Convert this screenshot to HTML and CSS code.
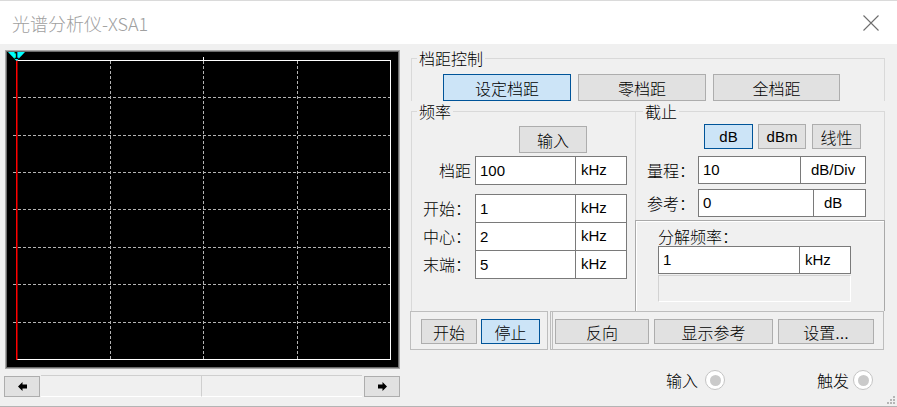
FILE: index.html
```html
<!DOCTYPE html>
<html>
<head>
    <title>光谱分析仪-XSA1</title>
    <link rel="stylesheet" href="styles.css">
</head>
<body>
<div class="window">
    <div class="titlebar">
        <span class="title">光谱分析仪-XSA1</span>
        <svg class="close" width="16" height="16" viewBox="0 0 16 16">
            <path d="M0.5 0.5L15.5 15.5M15.5 0.5L0.5 15.5" stroke="#6e6e6e" stroke-width="1.1" fill="none"/>
        </svg>
    </div>
    <div class="client">
        <div class="left">
            <div class="screen">
                <svg width="391" height="315" viewBox="0 0 391 315">
                    <rect width="391" height="315" fill="#000"/>
                    <g stroke="#b4b4b4" stroke-dasharray="3 2">
                        <line x1="6" y1="45.5" x2="383" y2="45.5"/>
                        <line x1="6" y1="83.5" x2="383" y2="83.5"/>
                        <line x1="6" y1="120.5" x2="383" y2="120.5"/>
                        <line x1="6" y1="157.5" x2="383" y2="157.5"/>
                        <line x1="6" y1="195.5" x2="383" y2="195.5"/>
                        <line x1="6" y1="232.5" x2="383" y2="232.5"/>
                        <line x1="6" y1="270.5" x2="383" y2="270.5"/>
                        <line x1="103.5" y1="9" x2="103.5" y2="307"/>
                        <line x1="196.5" y1="9" x2="196.5" y2="307"/>
                        <line x1="290.5" y1="9" x2="290.5" y2="307"/>
                    </g>
                    <rect x="9.5" y="8.5" width="374" height="299" fill="none" stroke="#fff"/>
                    <line x1="196.5" y1="5" x2="196.5" y2="8" stroke="#fff"/>
                    <line x1="9.75" y1="8" x2="9.75" y2="308" stroke="#f00" stroke-width="1.5"/>
                    <polygon points="1,0 18,0 9.5,9" fill="#0ff"/>
                    <text x="9.5" y="6.5" font-size="8" font-weight="bold" text-anchor="middle" font-family="DejaVu Sans">1</text>
                </svg>
            </div>
            <div class="hscroll">
                <div class="sbtn">
                    <svg width="9" height="9" viewBox="0 0 9 9"><path d="M0 4.5L4.5 0V2.5H9V6.5H4.5V9Z" fill="#000"/></svg>
                </div>
                <div class="track">
                    <div class="seg"></div>
                    <div class="seg seg-b"></div>
                </div>
                <div class="sbtn">
                    <svg width="9" height="9" viewBox="0 0 9 9"><path d="M9 4.5L4.5 0V2.5H0V6.5H4.5V9Z" fill="#000"/></svg>
                </div>
            </div>
        </div>

        <div class="right">
            <fieldset class="group span-group">
                <legend>档距控制</legend>
                <div class="span-btns">
                    <button class="btn on w-set">设定档距</button>
                    <button class="btn w-set">零档距</button>
                    <button class="btn w-full">全档距</button>
                </div>
            </fieldset>

            <div class="group-row">
                <fieldset class="group freq">
                    <legend>频率</legend>
                    <button class="btn btn-input">输入</button>
                    <div class="field-row first">
                        <span class="lbl">档距</span>
                        <input class="val" value="100">
                        <span class="unit">kHz</span>
                    </div>
                    <div class="field-row gap">
                        <span class="lbl">开始：</span>
                        <input class="val" value="1">
                        <span class="unit">kHz</span>
                    </div>
                    <div class="field-row stack">
                        <span class="lbl">中心：</span>
                        <input class="val" value="2">
                        <span class="unit">kHz</span>
                    </div>
                    <div class="field-row stack">
                        <span class="lbl">末端：</span>
                        <input class="val" value="5">
                        <span class="unit">kHz</span>
                    </div>
                </fieldset>

                <fieldset class="group cut">
                    <legend>截止</legend>
                    <div class="unit-btns">
                        <button class="btn latin on w-db">dB</button>
                        <button class="btn latin w-dbm">dBm</button>
                        <button class="btn w-lin">线性</button>
                    </div>
                    <div class="field-row range">
                        <span class="lbl">量程：</span>
                        <input class="val val-range" value="10">
                        <span class="unit unit-wide">dB/Div</span>
                    </div>
                    <div class="field-row ref">
                        <span class="lbl">参考：</span>
                        <input class="val val-ref" value="0">
                        <span class="unit unit-db">dB</span>
                    </div>
                    <div class="res-panel">
                        <div class="res-label">分解频率：</div>
                        <div class="field-row res">
                            <input class="val val-res" value="1">
                            <span class="unit">kHz</span>
                        </div>
                        <div class="res-blank"></div>
                    </div>
                </fieldset>
            </div>

            <div class="ctrl-row">
                <div class="ctrl-box run">
                    <button class="btn small w-start">开始</button>
                    <button class="btn small on w-stop">停止</button>
                </div>
                <div class="ctrl-box opts">
                    <button class="btn small w-rev">反向</button>
                    <button class="btn small w-show">显示参考</button>
                    <button class="btn small w-cfg">设置...</button>
                </div>
            </div>

            <div class="pins">
                <span class="pin-label">输入</span>
                <span class="radio"></span>
                <span class="pin-label pin-trig">触发</span>
                <span class="radio radio-trig"></span>
            </div>
        </div>
    </div>
    <svg class="grip" width="8" height="8" viewBox="0 0 8 8">
        <g fill="#b5b5b5">
            <rect x="6" y="0" width="2" height="2"/>
            <rect x="3" y="3" width="2" height="2"/>
            <rect x="6" y="3" width="2" height="2"/>
            <rect x="0" y="6" width="2" height="2"/>
            <rect x="3" y="6" width="2" height="2"/>
            <rect x="6" y="6" width="2" height="2"/>
        </g>
    </svg>
</div>
</body>
</html>
```

FILE: styles.css
```css
body {
    margin: 0;
    font-family: "Liberation Sans", "Noto Sans CJK SC", sans-serif;
    font-size: 16px;
    color: #000;
    background: #f0f0f0;
}
.window {
    position: relative;
    width: 897px;
    height: 406px;
    border-bottom: 1px solid #b4b4b4;
    background: #f0f0f0;
}
.titlebar {
    height: 43px;
    border-top: 1px solid #dadada;
    background: #fff;
    display: flex;
    align-items: center;
    justify-content: space-between;
    padding: 0 18px 0 12px;
}
.title {
    font-family: "Noto Sans CJK SC", sans-serif;
    font-size: 18px;
    font-weight: 300;
    line-height: 22px;
    color: #a0a0a0;
}
.close {
    display: block;
    margin-top: 1px;
}
.client {
    display: flex;
    height: 362px;
    padding-left: 4px;
}

/* left: the screen and its scroll bar */
.left {
    width: 396px;
    padding-top: 6px;
}
.screen {
    margin-left: 1px;
    width: 395px;
    height: 319px;
    box-sizing: border-box;
    border: 1px solid #a8a8a8;
    padding: 1px;
    background: #6b6b6b;
}
.screen svg {
    display: block;
}
.hscroll {
    display: flex;
    height: 21px;
    margin-top: 7px;
}
.sbtn {
    width: 36px;
    box-sizing: border-box;
    border: 1px solid #adadad;
    background: #e1e1e1;
    display: flex;
    align-items: center;
    justify-content: center;
}
.track {
    flex: 1;
    display: flex;
    padding: 0 2px 0 1px;
}
.seg {
    flex: 1;
    border-top: 1px solid #cfcfcf;
    border-bottom: 1px solid #fff;
    margin-top: -1px;
}
.seg-b {
    border-left: 1px solid #cfcfcf;
}

/* right: controls */
.right {
    width: 475px;
    margin-left: 10px;
    padding-top: 4px;
}
.group {
    margin: 0 0 0 1px;
    padding: 0;
    min-width: 0;
    box-sizing: border-box;
    border: 1px solid #d9d9d9;
    border-bottom: none;
}
.group legend {
    margin-left: 5px;
    padding: 0 2px;
    font-family: "Noto Sans CJK SC", sans-serif;
    font-size: 16px;
    font-weight: 300;
    line-height: 20px;
}
.cut legend {
    margin-left: 7px;
}
.span-group {
    width: 474px;
}
.span-btns {
    display: flex;
    gap: 7px;
    margin: 6px 0 0 31px;
}
.btn {
    box-sizing: border-box;
    height: 27px;
    margin: 0;
    padding: 0;
    border: 1px solid #adadad;
    background: #e1e1e1;
    font-family: "Liberation Sans", "Noto Sans CJK SC", sans-serif;
    font-size: 16px;
    font-weight: 300;
    color: #000;
}
.btn.on {
    background: #cce4f7;
    border-color: #005499;
}
.btn.latin {
    font-size: 15px;
    font-weight: 400;
}
.btn.small {
    height: 25px;
}
.w-set { width: 128px; }
.w-full { width: 127px; }

.group-row {
    display: flex;
    height: 210px;
}
.freq {
    width: 224px;
    height: 210px;
    border-right: none;
}
.cut {
    width: 250px;
    height: 210px;
    margin-left: 0;
}
.btn-input {
    display: block;
    width: 68px;
    margin: 5px 0 0 107px;
}

.field-row {
    display: flex;
    height: 29px;
}
.field-row.first {
    margin-top: 3px;
}
.field-row.gap {
    margin-top: 9px;
}
.field-row.stack {
    margin-top: -1px;
}
.lbl {
    width: 59px;
    margin-right: 4px;
    text-align: right;
    font-family: "Noto Sans CJK SC", sans-serif;
    font-size: 16px;
    font-weight: 300;
    line-height: 28px;
    white-space: nowrap;
}
.val {
    box-sizing: border-box;
    width: 101px;
    height: 100%;
    margin: 0;
    padding: 0 0 1px 4px;
    border: 1px solid #7a7a7a;
    background: #fff;
    font-family: "Liberation Sans", sans-serif;
    font-size: 15px;
    color: #000;
    outline: none;
}
.unit {
    box-sizing: border-box;
    width: 52px;
    height: 100%;
    margin-left: -1px;
    padding-left: 5px;
    border: 1px solid #7a7a7a;
    background: #fff;
    font-size: 15px;
    line-height: 25px;
}

.unit-btns {
    display: flex;
    margin: 3px 0 0 68px;
}
.unit-btns .btn {
    height: 25px;
}
.w-db { width: 49px; }
.w-dbm { width: 48px; margin-left: 5px !important; }
.w-lin { width: 49px; margin-left: 6px !important; }

.field-row.range {
    height: 28px;
    margin-top: 7px;
}
.field-row.ref {
    height: 28px;
    margin-top: 5px;
}
.cut .lbl {
    margin-right: 3px;
}
.val-range { width: 103px; }
.unit-wide {
    width: 66px;
    padding-left: 10px;
}
.val-ref { width: 116px; }
.unit-db {
    width: 53px;
    padding-left: 10px;
}

.res-panel {
    box-sizing: border-box;
    height: 91px;
    margin: 3px -1px 0;
    padding-left: 22px;
    border: 1px solid #a9a9a9;
    border-bottom: none;
    box-shadow: inset 1px 1px 0 #fff;
}
.res-label {
    margin-top: 5px;
    font-family: "Noto Sans CJK SC", sans-serif;
    font-size: 16px;
    font-weight: 300;
    line-height: 20px;
}
.field-row.res {
    height: 28px;
}
.val-res { width: 142px; }
.res-blank {
    box-sizing: border-box;
    width: 193px;
    height: 27px;
    margin-top: 1px;
    border: 1px solid;
    border-color: #d2d2d2 #fff #fff #d2d2d2;
}

.ctrl-row {
    display: flex;
    height: 39px;
}
.ctrl-box {
    box-sizing: border-box;
    height: 39px;
    display: flex;
    border: 1px solid #bdbdbd;
    padding-top: 7px;
}
.run {
    width: 138px;
    gap: 4px;
    padding-left: 10px;
}
.opts {
    width: 334px;
    margin-left: 2px;
    gap: 5px;
    padding-left: 2px;
    border-left: 3px double #bdbdbd;
}
.w-start { width: 56px; }
.w-stop { width: 59px; }
.w-rev { width: 94px; }
.w-show { width: 119px; }
.w-cfg { width: 96px; }

.pins {
    display: flex;
    align-items: center;
    height: 20px;
    margin-top: 20px;
    padding-left: 256px;
}
.pin-label {
    font-family: "Noto Sans CJK SC", sans-serif;
    font-size: 16px;
    font-weight: 300;
    line-height: 20px;
}
.pin-trig {
    margin-left: 92px;
}
.radio {
    box-sizing: border-box;
    width: 20px;
    height: 20px;
    margin-left: 7px;
    border: 1px solid #c4c4c4;
    border-radius: 50%;
    background: #fff;
    display: flex;
    align-items: center;
    justify-content: center;
}
.radio::after {
    content: "";
    width: 11px;
    height: 11px;
    border-radius: 50%;
    background: #cacaca;
}
.radio-trig {
    margin-left: 4px;
}
.grip {
    position: absolute;
    right: 2px;
    bottom: 2px;
}
```
